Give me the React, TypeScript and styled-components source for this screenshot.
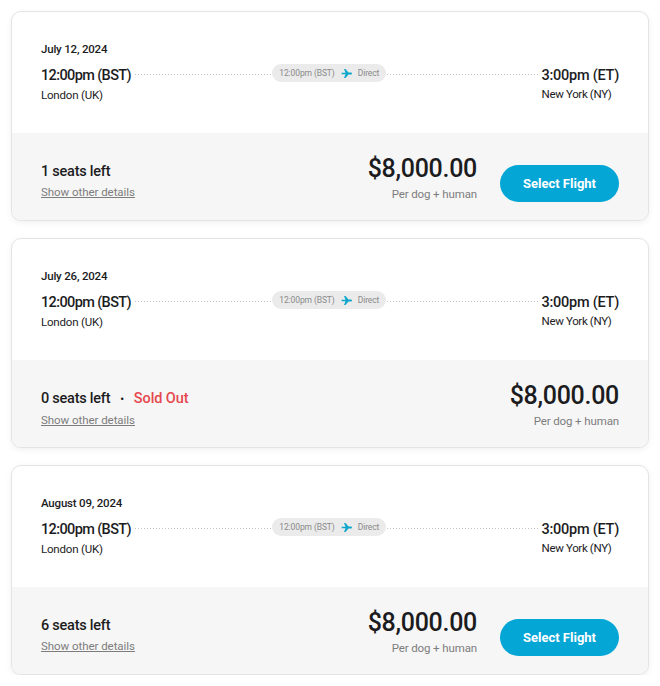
import { createGlobalStyle } from 'styled-components';
import styled from 'styled-components';

const flights = [
  { date: 'July 12, 2024', seats: 1, soldOut: false },
  { date: 'July 26, 2024', seats: 0, soldOut: true },
  { date: 'August 09, 2024', seats: 6, soldOut: false },
];

function Plane() {
  return (
    <PlaneIcon width="11" height="9" viewBox="0 0 22 18" fill="#10a6cc">
      <path d="M0 7.6h9L6 0h3l6 7.2h5c1.3 0 2 .8 2 1.8s-.7 1.8-2 1.8h-5L9 18H6l3-7.6H0L2.2 9z" />
    </PlaneIcon>
  );
}

function App() {
  return (
    <Page>
      <GlobalStyle />
      {flights.map((flight) => (
        <Card key={flight.date}>
          <Top>
            <FlightDate>{flight.date}</FlightDate>
            <Route>
              <Stop>
                <Time>12:00pm (BST)</Time>
                <City>London (UK)</City>
              </Stop>
              <Line>
                <Pill>
                  12:00pm (BST) <Plane /> Direct
                </Pill>
              </Line>
              <Stop>
                <Time $arrival>3:00pm (ET)</Time>
                <City $arrival>New York (NY)</City>
              </Stop>
            </Route>
          </Top>
          <Bottom>
            <SeatInfo>
              <Seats>
                {flight.seats} seats left
                {flight.soldOut && (
                  <>
                    <Dot>•</Dot>
                    <SoldOut>Sold Out</SoldOut>
                  </>
                )}
              </Seats>
              <Details href="#">Show other details</Details>
            </SeatInfo>
            <Buy>
              <PriceBox>
                <Price>$8,000.00</Price>
                <PerPerson>Per dog + human</PerPerson>
              </PriceBox>
              {!flight.soldOut && <SelectButton>Select Flight</SelectButton>}
            </Buy>
          </Bottom>
        </Card>
      ))}
    </Page>
  );
}

const GlobalStyle = createGlobalStyle`
  html, body {
    margin: 0;
    background: #fff;
  }

  body {
    font-family: Roboto, "Noto Sans", sans-serif;
    color: #1c1c1e;
  }
`;

const Page = styled.main`
  display: flex;
  flex-direction: column;
  gap: 17px;
  padding: 11px 11px 0 11px;
`;

const Card = styled.section`
  display: flex;
  flex-direction: column;
  height: 210px;
  box-sizing: border-box;
  overflow: hidden;
  background: #fff;
  border: 1px solid #e4e4e4;
  border-radius: 10px;
  box-shadow: 0 2px 6px rgba(0, 0, 0, 0.06);
`;

const Top = styled.div`
  height: 121px;
  box-sizing: border-box;
  padding: 30px 29px 0 29px;
`;

const FlightDate = styled.div`
  font-size: 11.5px;
  font-weight: 500;
  letter-spacing: -0.2px;
  line-height: 15px;
  margin-bottom: 10px;
`;

const Route = styled.div`
  display: flex;
  justify-content: space-between;
`;

const Stop = styled.div`
  display: flex;
  flex-direction: column;
  gap: 3px;
`;

const Time = styled.div<{ $arrival?: boolean }>`
  font-size: 14.5px;
  font-weight: 500;
  letter-spacing: ${({ $arrival }) => ($arrival ? '-0.25px' : '-0.62px')};
  line-height: 18px;
  white-space: nowrap;
`;

const City = styled.div<{ $arrival?: boolean }>`
  font-size: 11.5px;
  letter-spacing: ${({ $arrival }) => ($arrival ? '-0.35px' : '-0.2px')};
  line-height: 15px;
  margin-top: ${({ $arrival }) => ($arrival ? '-1px' : '0')};
`;

const Line = styled.div`
  flex: 1;
  display: flex;
  justify-content: center;
  align-items: center;
  height: 18px;
  margin: 0 4px;
  background: linear-gradient(to right, #c4c4c4 50%, transparent 50%) 0 calc(50% - 2px) / 3px 1px repeat-x;
`;

const Pill = styled.div`
  display: flex;
  align-items: center;
  gap: 5px;
  height: 18px;
  padding: 0 7px;
  margin: -6px 14px 0 0;
  background: #ebebeb;
  border-radius: 9px;
  color: #8a8a8a;
  font-size: 8.5px;
  letter-spacing: -0.1px;
  white-space: nowrap;
`;

const PlaneIcon = styled.svg`
  flex: none;
  margin: 0 1px;
`;

const Bottom = styled.div`
  flex: 1;
  display: flex;
  align-items: center;
  justify-content: space-between;
  padding: 0 29px;
  background: #f6f6f6;
`;

const SeatInfo = styled.div`
  margin-top: 10px;
`;

const Seats = styled.div`
  font-size: 14.5px;
  font-weight: 500;
  letter-spacing: -0.25px;
  line-height: 18px;
  margin-bottom: 4px;
`;

const Dot = styled.span`
  margin: 0 10px;
  font-size: 11px;
`;

const SoldOut = styled.span`
  color: #e5484d;
  letter-spacing: -0.1px;
`;

const Details = styled.a`
  display: block;
  color: #7d7d7d;
  font-size: 11.5px;
  letter-spacing: -0.05px;
  line-height: 15px;
  text-decoration: underline;
`;

const Buy = styled.div`
  display: flex;
  align-items: center;
  gap: 23px;
`;

const PriceBox = styled.div`
  text-align: right;
  margin-top: 1px;
`;

const Price = styled.div`
  font-size: 25px;
  font-weight: 500;
  letter-spacing: -0.3px;
  line-height: 30px;
  margin-top: 1px;
`;

const PerPerson = styled.div`
  color: #7d7d7d;
  font-size: 11.5px;
  letter-spacing: -0.12px;
  line-height: 16px;
  margin-top: 2px;
`;

const SelectButton = styled.button`
  width: 119px;
  height: 37px;
  margin-top: 14px;
  border: 0;
  border-radius: 19px;
  background: #04a6d6;
  color: #fff;
  font-family: inherit;
  font-size: 13px;
  font-weight: 700;
`;

export default App;
